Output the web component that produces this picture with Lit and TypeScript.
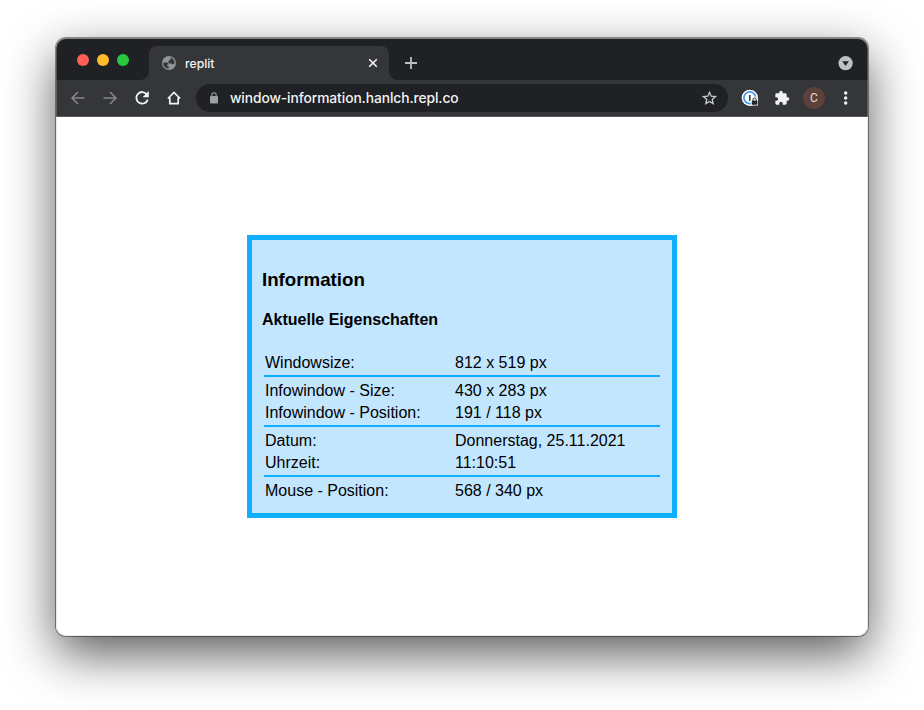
import { LitElement, html, css, svg } from "lit";
import { customElement } from "lit/decorators.js";

@customElement("browser-tabs")
class BrowserTabs extends LitElement {
  static styles = css`
    :host { display: flex; height: 42px; background: #202124; padding: 0 15px 0 21px; box-sizing: border-box; font: 13px Inter, sans-serif; }
    .lights { display: flex; gap: 8px; width: 72px; padding-top: 16px; }
    .light { width: 12px; height: 12px; border-radius: 50%; }
    .red { background: #ff5f57; }
    .yellow { background: #febc2e; }
    .green { background: #28c840; }
    .tab { position: relative; display: flex; align-items: center; box-sizing: border-box; width: 240px; height: 34px; margin-top: 8px; padding: 0 10px 0 13px; background: #35363a; border-radius: 8px 8px 0 0; color: #f1f3f4; }
    .tab::before, .tab::after { content: ""; position: absolute; bottom: 0; width: 8px; height: 8px; }
    .tab::before { left: -8px; background: radial-gradient(circle at 0 0, transparent 7.5px, #35363a 8px); }
    .tab::after { right: -8px; background: radial-gradient(circle at 100% 0, transparent 7.5px, #35363a 8px); }
    .title { flex: 1; margin: 1px 0 0 9px; font-size: 12.2px; font-weight: 500; line-height: 16px; }
    .plus { margin: 19px 0 0 16px; }
    .menu { margin: 18px 0 0 auto; }
    svg { display: block; }
  `;
  render() {
    return html`
      <div class="lights">
        <span class="light red"></span><span class="light yellow"></span><span class="light green"></span>
      </div>
      <div class="tab">
        <svg width="14" height="14" viewBox="0 0 14 14">
          <circle cx="7" cy="7" r="7" fill="#8f959b" />
          <path d="M1.4 6.6H4.6Q6.7 6.9 6.7 8.6H5.2V10.2H6.7V12.6C3.2 12.6.9 9.9 1.4 6.6Z M8.6 1.6C11.2 2.3 12.7 4.6 12.5 7.5L10.6 8.6 9.2 7.6H7.4L6.4 6.5V5.2L7.6 4.1H8.6Z" fill="#35363a" />
        </svg>
        <span class="title">replit</span>
        <svg width="12" height="12" viewBox="0 0 12 12"><path d="M2.2 2.2 9.8 9.8M9.8 2.2 2.2 9.8" stroke="#f1f3f4" stroke-width="1.6" /></svg>
      </div>
      <svg class="plus" width="12" height="12" viewBox="0 0 12 12"><path d="M6 0V12M0 6H12" stroke="#bdc1c6" stroke-width="1.8" /></svg>
      <svg class="menu" width="15" height="15" viewBox="0 0 15 15"><circle cx="7.6" cy="7.2" r="7.1" fill="#bdc1c6" /><path d="M4.3 5.3H10.9L7.6 10Z" fill="#202124" /></svg>
    `;
  }
}

@customElement("browser-toolbar")
class BrowserToolbar extends LitElement {
  static styles = css`
    :host { display: flex; align-items: center; height: 37px; box-sizing: border-box; padding: 0 14px; background: #35363a; border-bottom: 1px solid #59595c; font-family: Inter, sans-serif; }
    svg { display: block; flex: none; }
    .nav { display: flex; gap: 16px; }
    .address { display: flex; align-items: center; flex: 1; height: 28px; box-sizing: border-box; margin: 0 13px 0 14px; padding: 0 10px 0 13px; border-radius: 14px; background: #202124; }
    .url { flex: 1; margin-left: 11px; color: #f1f3f4; font-size: 13.8px; font-weight: 500; letter-spacing: -0.08px; line-height: 20px; white-space: nowrap; }
    .actions { display: flex; align-items: center; }
    .puzzle { margin-left: 15px; }
    .avatar { width: 22px; height: 22px; margin-left: 13px; border-radius: 50%; background: #5d4037; color: #e4dcd9; font: 12px/22px Roboto, sans-serif; text-align: center; }
    .dots { margin-left: 13px; }
  `;
  render() {
    return html`
      <div class="nav">
        <svg width="16" height="16" viewBox="0 0 16 16"><path d="M14.5 8H2M8 2 2 8l6 6" fill="none" stroke="#87888b" stroke-width="1.5" /></svg>
        <svg width="16" height="16" viewBox="0 0 16 16"><path d="M1.5 8H14M8 2l6 6-6 6" fill="none" stroke="#87888b" stroke-width="1.5" /></svg>
        <svg width="16" height="16" viewBox="0 0 16 16"><path d="M13 4.6A5.8 5.8 0 1 0 13.7 9.6" fill="none" stroke="#f1f3f4" stroke-width="1.8" /><path d="M14.8 1V7.2H8.6Z" fill="#f1f3f4" /></svg>
        <svg width="16" height="16" viewBox="0 0 16 16"><path d="M1.9 8.5 8 2.4l6.1 6.1M3.8 7.4V13.6H12.2V7.4" fill="none" stroke="#f1f3f4" stroke-width="1.7" /></svg>
      </div>
      <div class="address">
        <svg width="10" height="12" viewBox="0 0 10 12"><rect x="1" y="4" width="8" height="7.5" rx="1" fill="#9aa0a6" /><path d="M2.8 4.5V3a2.2 2.2 0 0 1 4.4 0V4.5" fill="none" stroke="#9aa0a6" stroke-width="1.1" /></svg>
        <span class="url">window-information.hanlch.repl.co</span>
        <svg width="16" height="16" viewBox="0 0 16 16"><path d="M7.5 2.3 9.2 6.2 13.5 6.6 10.2 9.4 11.2 13.6 7.5 11.4 3.8 13.6 4.8 9.4 1.5 6.6 5.8 6.2Z" fill="none" stroke="#c6c9cd" stroke-width="1.3" /></svg>
      </div>
      <div class="actions">
        <svg width="18" height="18" viewBox="0 0 18 18">
          <circle cx="8.8" cy="8.8" r="8.1" fill="#fff" />
          <circle cx="8.8" cy="8.8" r="5.9" fill="#fff" stroke="#459cf5" stroke-width="1.8" />
          <path d="M8 6h1.6v6H8z" fill="#303a46" />
          <path d="M9.8 16.5V10.6L11.2 7.8H15.4L17 10.6V16.5Z" fill="#fff" />
          <rect x="10.8" y="11.6" width="5.6" height="4.2" rx=".4" fill="#252525" />
          <path d="M12 11.8V10.6a1.6 1.6 0 0 1 3.2 0v1.2" fill="none" stroke="#252525" />
        </svg>
        <svg class="puzzle" width="16" height="16" viewBox="0 0 24 24"><path d="M20.5 11H19V7a2 2 0 0 0-2-2h-4V3.5a2.5 2.5 0 0 0-5 0V5H4a2 2 0 0 0-2 2v3.8h1.5a2.7 2.7 0 0 1 0 5.4H2V20a2 2 0 0 0 2 2h3.8v-1.5a2.7 2.7 0 0 1 5.4 0V22H17a2 2 0 0 0 2-2v-4h1.5a2.5 2.5 0 0 0 0-5z" fill="#f1f3f4" /></svg>
        <span class="avatar">C</span>
        <svg class="dots" width="16" height="16" viewBox="0 0 16 16">${[3, 8, 13].map((y) => svg`<circle cx="7.7" cy=${y} r="1.7" fill="#f1f3f4" />`)}</svg>
      </div>
    `;
  }
}

@customElement("info-card")
class InfoCard extends LitElement {
  static styles = css`
    :host { display: block; box-sizing: border-box; width: 430px; height: 283px; border: 5px solid #10b0ff; background: #c3e6ff; padding: 0 10px; color: #000; font: 16px/20px "Liberation Sans", Arial, sans-serif; }
    .heading { margin: 29px 0 0; font-size: 18.72px; line-height: 22px; }
    .subheading { margin: 19px 0 0; font-size: 16px; line-height: 20px; }
    .groups { margin: 23px 2px 0; }
    .group { display: flex; flex-direction: column; gap: 2px; }
    .group + .group { margin-top: 2px; padding-top: 4px; border-top: 2px solid #10b0ff; }
    .row { display: grid; grid-template-columns: 190px 1fr; padding-left: 1px; white-space: nowrap; }
  `;
  private groups = [
    [["Windowsize:", "812 x 519 px"]],
    [["Infowindow - Size:", "430 x 283 px"], ["Infowindow - Position:", "191 / 118 px"]],
    [["Datum:", "Donnerstag, 25.11.2021"], ["Uhrzeit:", "11:10:51"]],
    [["Mouse - Position:", "568 / 340 px"]],
  ];
  render() {
    return html`
      <h3 class="heading">Information</h3>
      <h4 class="subheading">Aktuelle Eigenschaften</h4>
      <div class="groups">
        ${this.groups.map((rows) => html`<div class="group">${rows.map(([label, value]) => html`<div class="row"><span>${label}</span><span>${value}</span></div>`)}</div>`)}
      </div>
    `;
  }
}

@customElement("app-root")
class AppRoot extends LitElement {
  static styles = css`
    :host { display: block; box-sizing: border-box; width: 924px; height: 710px; padding: 38px 56px 74px; background: #fff; overflow: hidden; }
    .window { position: relative; display: flex; flex-direction: column; height: 598px; border-radius: 10px; overflow: hidden; background: #fff; }
    .shadow { border-radius: 10px; box-shadow: 0 0 0 1px rgba(0, 0, 0, 0.4), 0 18px 50px rgba(0, 0, 0, 0.65); }
    .window::after { content: ""; position: absolute; inset: 0; border-radius: 10px; box-shadow: inset 0 1px 0 rgba(255, 255, 255, 0.3), inset 0 0 0 1px rgba(190, 190, 190, 0.3); pointer-events: none; }
    .page { display: flex; justify-content: center; align-items: flex-start; flex: 1; padding-top: 118px; }
  `;
  render() {
    return html`
      <div class="shadow">
        <div class="window">
          <browser-tabs></browser-tabs>
          <browser-toolbar></browser-toolbar>
          <main class="page"><info-card></info-card></main>
        </div>
      </div>
    `;
  }
}
